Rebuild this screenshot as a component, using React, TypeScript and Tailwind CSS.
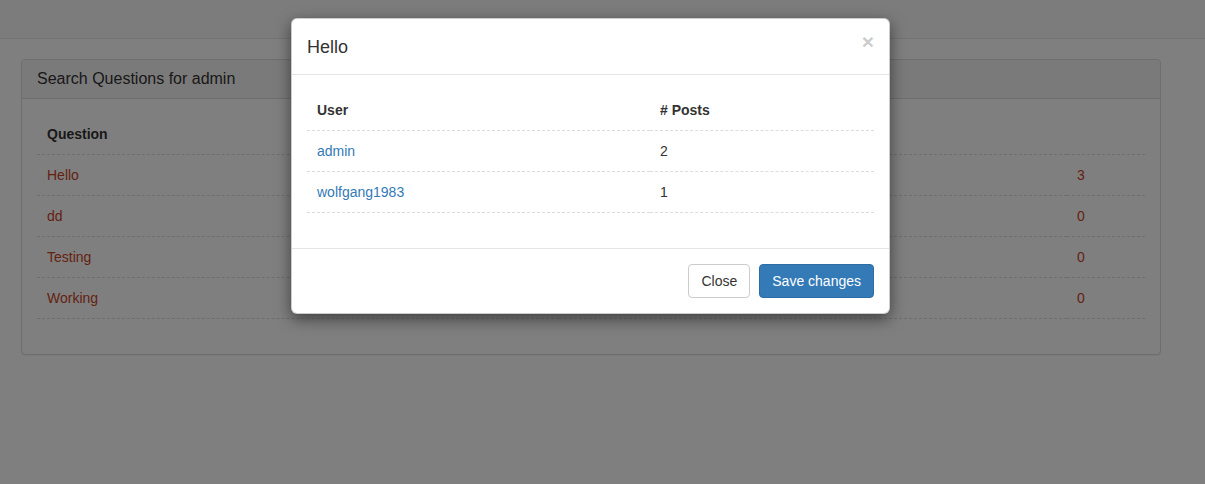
const questions = [
  { title: 'Hello', count: 3 },
  { title: 'dd', count: 0 },
  { title: 'Testing', count: 0 },
  { title: 'Working', count: 0 },
]

const users = [
  { name: 'admin', posts: 2 },
  { name: 'wolfgang1983', posts: 1 },
]

export default function App() {
  return (
    <div className="relative h-[484px] w-[1205px] overflow-hidden bg-white font-['Liberation_Sans',Arial,sans-serif] text-[14px] leading-[20px] text-[#333]">
      {/* Navbar */}
      <div className="h-[39px] border-b border-[#e7e7e7] bg-[#f8f8f8]" />

      {/* Page content */}
      <div className="pl-[21px] pt-[20px]">
        <div className="w-[1140px] rounded-[4px] border border-[#ddd] bg-white shadow-[0_1px_1px_rgba(0,0,0,0.05)]">
          <div className="h-[39px] rounded-t-[4px] border-b border-[#ddd] bg-[#f5f5f5] px-[15px] py-[9px] text-[16px] leading-[20px]">
            Search Questions for admin
          </div>
          <div className="p-[15px]">
            <table className="mb-[20px] w-full border-collapse">
              <thead>
                <tr className="border-b border-dashed border-[#ddd]">
                  <th className="h-[40px] px-[10px] text-left font-bold">Question</th>
                  <th className="px-[10px] text-left font-bold">Answers</th>
                  <th className="w-[78px] px-[10px] text-left font-bold"></th>
                </tr>
              </thead>
              <tbody>
                {questions.map((q) => (
                  <tr key={q.title} className="border-b border-dashed border-[#ddd] text-[#c9441f]">
                    <td className="h-[41px] px-[10px]">{q.title}</td>
                    <td className="px-[10px]"></td>
                    <td className="px-[10px]">{q.count}</td>
                  </tr>
                ))}
              </tbody>
            </table>
          </div>
        </div>
      </div>

      {/* Backdrop */}
      <div className="absolute inset-0 bg-black/50" />

      {/* Modal */}
      <div className="absolute left-[291px] top-[18px] w-[599px] rounded-[6px] border border-black/20 bg-white shadow-[0_5px_15px_rgba(0,0,0,0.5)]">
        <div className="flex h-[56px] items-start justify-between border-b border-[#e5e5e5] px-[15px] pt-[16px]">
          <h4 className="text-[18px] leading-[24px]">Hello</h4>
          <button className="mt-[-5px] text-[21px] font-bold leading-[24px] text-black opacity-20">×</button>
        </div>
        <div className="p-[15px]">
          <table className="mb-[20px] w-full border-collapse">
            <thead>
              <tr className="border-b border-dashed border-[#ddd]">
                <th className="h-[40px] w-[343px] px-[10px] text-left font-bold">User</th>
                <th className="px-[10px] text-left font-bold"># Posts</th>
              </tr>
            </thead>
            <tbody>
              {users.map((u) => (
                <tr key={u.name} className="border-b border-dashed border-[#ddd]">
                  <td className="h-[41px] px-[10px] text-[#337ab7]">{u.name}</td>
                  <td className="px-[10px]">{u.posts}</td>
                </tr>
              ))}
            </tbody>
          </table>
        </div>
        <div className="flex justify-end gap-[9px] border-t border-[#e5e5e5] p-[15px]">
          <button className="h-[34px] rounded-[4px] border border-[#ccc] bg-white px-[12px] text-[#333]">Close</button>
          <button className="h-[34px] rounded-[4px] border border-[#2e6da4] bg-[#337ab7] px-[12px] text-white">Save changes</button>
        </div>
      </div>
    </div>
  )
}
